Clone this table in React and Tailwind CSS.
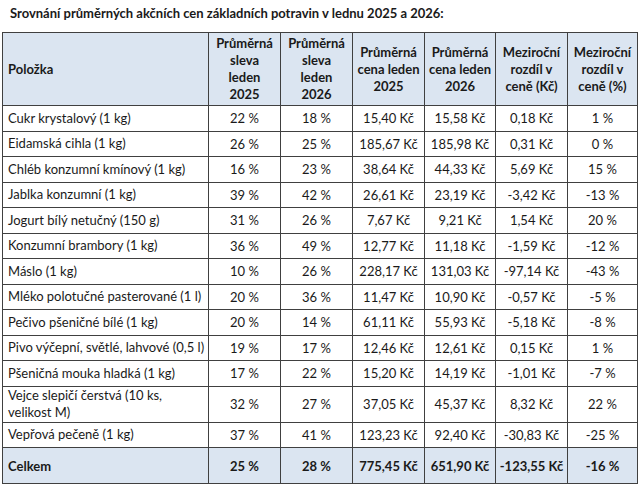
import React from "react";

const rows = [
  ["Cukr krystalový (1 kg)", "22 %", "18 %", "15,40 Kč", "15,58 Kč", "0,18 Kč", "1 %"],
  ["Eidamská cihla (1 kg)", "26 %", "25 %", "185,67 Kč", "185,98 Kč", "0,31 Kč", "0 %"],
  ["Chléb konzumní kmínový (1 kg)", "16 %", "23 %", "38,64 Kč", "44,33 Kč", "5,69 Kč", "15 %"],
  ["Jablka konzumní (1 kg)", "39 %", "42 %", "26,61 Kč", "23,19 Kč", "-3,42 Kč", "-13 %"],
  ["Jogurt bílý netučný (150 g)", "31 %", "26 %", "7,67 Kč", "9,21 Kč", "1,54 Kč", "20 %"],
  ["Konzumní brambory (1 kg)", "36 %", "49 %", "12,77 Kč", "11,18 Kč", "-1,59 Kč", "-12 %"],
  ["Máslo (1 kg)", "10 %", "26 %", "228,17 Kč", "131,03 Kč", "-97,14 Kč", "-43 %"],
  ["Mléko polotučné pasterované (1 l)", "20 %", "36 %", "11,47 Kč", "10,90 Kč", "-0,57 Kč", "-5 %"],
  ["Pečivo pšeničné bílé (1 kg)", "20 %", "14 %", "61,11 Kč", "55,93 Kč", "-5,18 Kč", "-8 %"],
  ["Pivo výčepní, světlé, lahvové (0,5 l)", "19 %", "17 %", "12,46 Kč", "12,61 Kč", "0,15 Kč", "1 %"],
  ["Pšeničná mouka hladká (1 kg)", "17 %", "22 %", "15,20 Kč", "14,19 Kč", "-1,01 Kč", "-7 %"],
  [["Vejce slepičí čerstvá (10 ks,", "velikost M)"], "32 %", "27 %", "37,05 Kč", "45,37 Kč", "8,32 Kč", "22 %"],
  ["Vepřová pečeně (1 kg)", "37 %", "41 %", "123,23 Kč", "92,40 Kč", "-30,83 Kč", "-25 %"],
];

const headers = [
  ["Průměrná", "sleva", "leden", "2025"],
  ["Průměrná", "sleva", "leden", "2026"],
  ["Průměrná", "cena leden", "2025"],
  ["Průměrná", "cena leden", "2026"],
  ["Meziroční", "rozdíl v", "ceně (Kč)"],
  ["Meziroční", "rozdíl v", "ceně (%)"],
];

const widths = ["w-[206px]", "w-[72px]", "w-[72px]", "w-[72px]", "w-[71px]", "w-[72px]", "w-[70px]"];

function Lines({ lines }) {
  return lines.map((l, i) => (
    <div key={i} className="whitespace-nowrap">
      {l}
    </div>
  ));
}

export default function App() {
  return (
    <div
      className="w-[640px] h-[494px] bg-white text-[#1a1a1a] overflow-hidden"
      style={{ fontFamily: "Lato, 'Open Sans', sans-serif" }}
    >
      <div className="pl-[10px] pt-[4px] h-[32px] text-[13px] font-bold leading-[18px]">
        Srovnání průměrných akčních cen základních potravin v lednu 2025 a 2026:
      </div>
      <table className="ml-[2px] w-[635px] table-fixed border-collapse text-[13px] leading-[16px]">
        <colgroup>
          {widths.map((w, i) => (
            <col key={i} className={w} />
          ))}
        </colgroup>
        <thead>
          <tr className="h-[73px] bg-[#dbe5f1]">
            <th className="border border-[#404040] text-left font-bold px-[5px]">Položka</th>
            {headers.map((h, i) => (
              <th key={i} className="border border-[#404040] font-bold text-center px-0 leading-[17px]">
                <Lines lines={h} />
              </th>
            ))}
          </tr>
        </thead>
        <tbody>
          {rows.map((r, i) => (
            <tr key={i} className={Array.isArray(r[0]) ? "h-[36px]" : "h-[25.5px]"}>
              {r.map((c, j) => (
                <td
                  key={j}
                  className={
                    "border border-[#404040] p-0 whitespace-nowrap " +
                    (j === 0 ? "text-left pl-[5px] leading-[17px]" : "text-center")
                  }
                >
                  {Array.isArray(c) ? <Lines lines={c} /> : c}
                </td>
              ))}
            </tr>
          ))}
          <tr className="h-[36px] bg-[#dbe5f1] font-bold">
            {["Celkem", "25 %", "28 %", "775,45 Kč", "651,90 Kč", "-123,55 Kč", "-16 %"].map((c, j) => (
              <td
                key={j}
                className={
                  "border border-[#404040] p-0 whitespace-nowrap " + (j === 0 ? "text-left pl-[5px]" : "text-center")
                }
              >
                {c}
              </td>
            ))}
          </tr>
        </tbody>
      </table>
    </div>
  );
}
